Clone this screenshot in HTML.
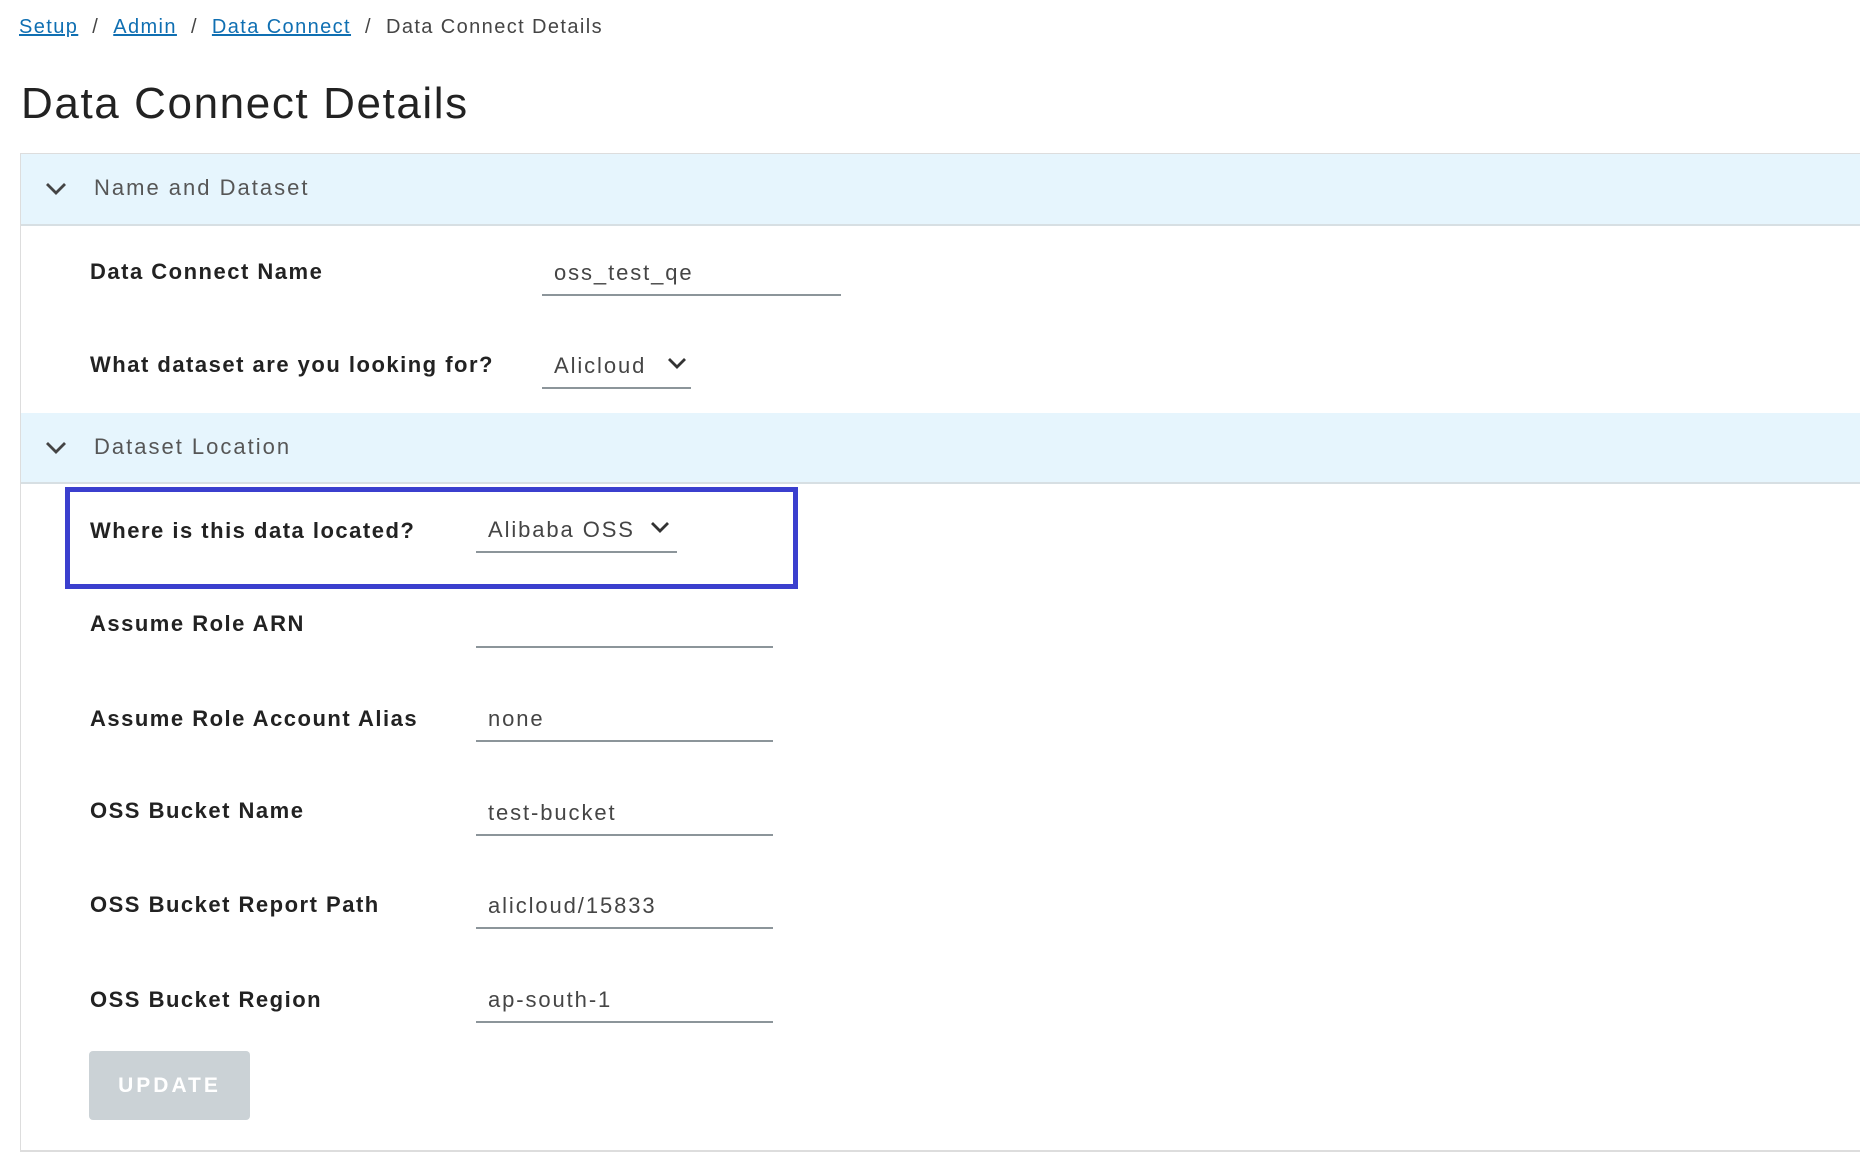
<!DOCTYPE html>
<html><head><style>
body{margin:0;width:1860px;height:1162px;background:#fff;font-family:"Liberation Sans",sans-serif;color:#313131;position:relative;overflow:hidden}
.a{position:absolute;white-space:nowrap}
.bc{top:16px;left:19px;font-size:20px;color:#454545;letter-spacing:1.4px}
.bc a{color:#0f6fb2;text-decoration:underline}
.bc span{margin:0 14px}
h1{position:absolute;left:21px;top:79px;margin:0;font-weight:normal;font-size:44px;color:#222;letter-spacing:1.6px}
.panel{position:absolute;left:20px;top:153px;width:1860px;height:996px;border-left:1px solid #ddd;border-top:1px solid #ddd;border-bottom:2px solid #ddd}
.hdr{position:absolute;left:21px;width:1840px;background:#e6f5fd;border-bottom:2px solid #d7dfe3;font-size:22px;color:#565656;letter-spacing:2px}
.hdr .t{position:absolute;left:73px}
.hdr svg{position:absolute;left:24px}
.lbl{font-weight:bold;font-size:22px;color:#222;left:90px;letter-spacing:1.5px}
.inp{border-bottom:2px solid #8c959a;height:30px;font-size:22px;color:#454545;letter-spacing:1.9px}
.inp span{position:absolute;left:12px;bottom:8px}
.box{position:absolute;left:65px;top:487px;width:723px;height:92px;border:5px solid #3b3fce}
.btn{position:absolute;left:89px;top:1051px;width:161px;height:69px;background:#cbd2d6;border-radius:4px;color:#fff;font-weight:bold;font-size:21px;letter-spacing:3px;text-align:center;line-height:69px}
</style></head><body>
<div class="a bc"><a>Setup</a><span>/</span><a>Admin</a><span>/</span><a>Data Connect</a><span>/</span>Data Connect Details</div>
<h1>Data Connect Details</h1>
<div class="panel"></div>
<div class="hdr" style="top:154px;height:70px"><svg style="top:28px" width="22" height="14" viewBox="0 0 22 14"><path d="M2 2l9 9 9-9" fill="none" stroke="#444" stroke-width="2.8"/></svg><span class="t" style="top:21px">Name and Dataset</span></div>
<div class="a lbl" style="top:259px">Data Connect Name</div>
<div class="a inp" style="left:542px;top:264px;width:299px"><span>oss_test_qe</span></div>
<div class="a lbl" style="top:352px">What dataset are you looking for?</div>
<div class="a inp" style="left:542px;top:357px;width:149px"><span>Alicloud</span><svg style="position:absolute;left:125px;top:0" width="20" height="14" viewBox="0 0 20 14"><path d="M2 2l8 8 8-8" fill="none" stroke="#333" stroke-width="2.8"/></svg></div>
<div class="hdr" style="top:413px;height:69px"><svg style="top:28px" width="22" height="14" viewBox="0 0 22 14"><path d="M2 2l9 9 9-9" fill="none" stroke="#444" stroke-width="2.8"/></svg><span class="t" style="top:21px">Dataset Location</span></div>
<div class="box"></div>
<div class="a lbl" style="top:518px">Where is this data located?</div>
<div class="a inp" style="left:476px;top:521px;width:201px"><span>Alibaba OSS</span><svg style="position:absolute;left:174px;top:0" width="20" height="14" viewBox="0 0 20 14"><path d="M2 2l8 8 8-8" fill="none" stroke="#333" stroke-width="2.8"/></svg></div>
<div class="a lbl" style="top:611px">Assume Role ARN</div>
<div class="a inp" style="left:476px;top:616px;width:297px"></div>
<div class="a lbl" style="top:706px">Assume Role Account Alias</div>
<div class="a inp" style="left:476px;top:710px;width:297px"><span>none</span></div>
<div class="a lbl" style="top:798px">OSS Bucket Name</div>
<div class="a inp" style="left:476px;top:804px;width:297px"><span>test-bucket</span></div>
<div class="a lbl" style="top:892px">OSS Bucket Report Path</div>
<div class="a inp" style="left:476px;top:897px;width:297px"><span>alicloud/15833</span></div>
<div class="a lbl" style="top:987px">OSS Bucket Region</div>
<div class="a inp" style="left:476px;top:991px;width:297px"><span>ap-south-1</span></div>
<div class="btn">UPDATE</div>
</body></html>
